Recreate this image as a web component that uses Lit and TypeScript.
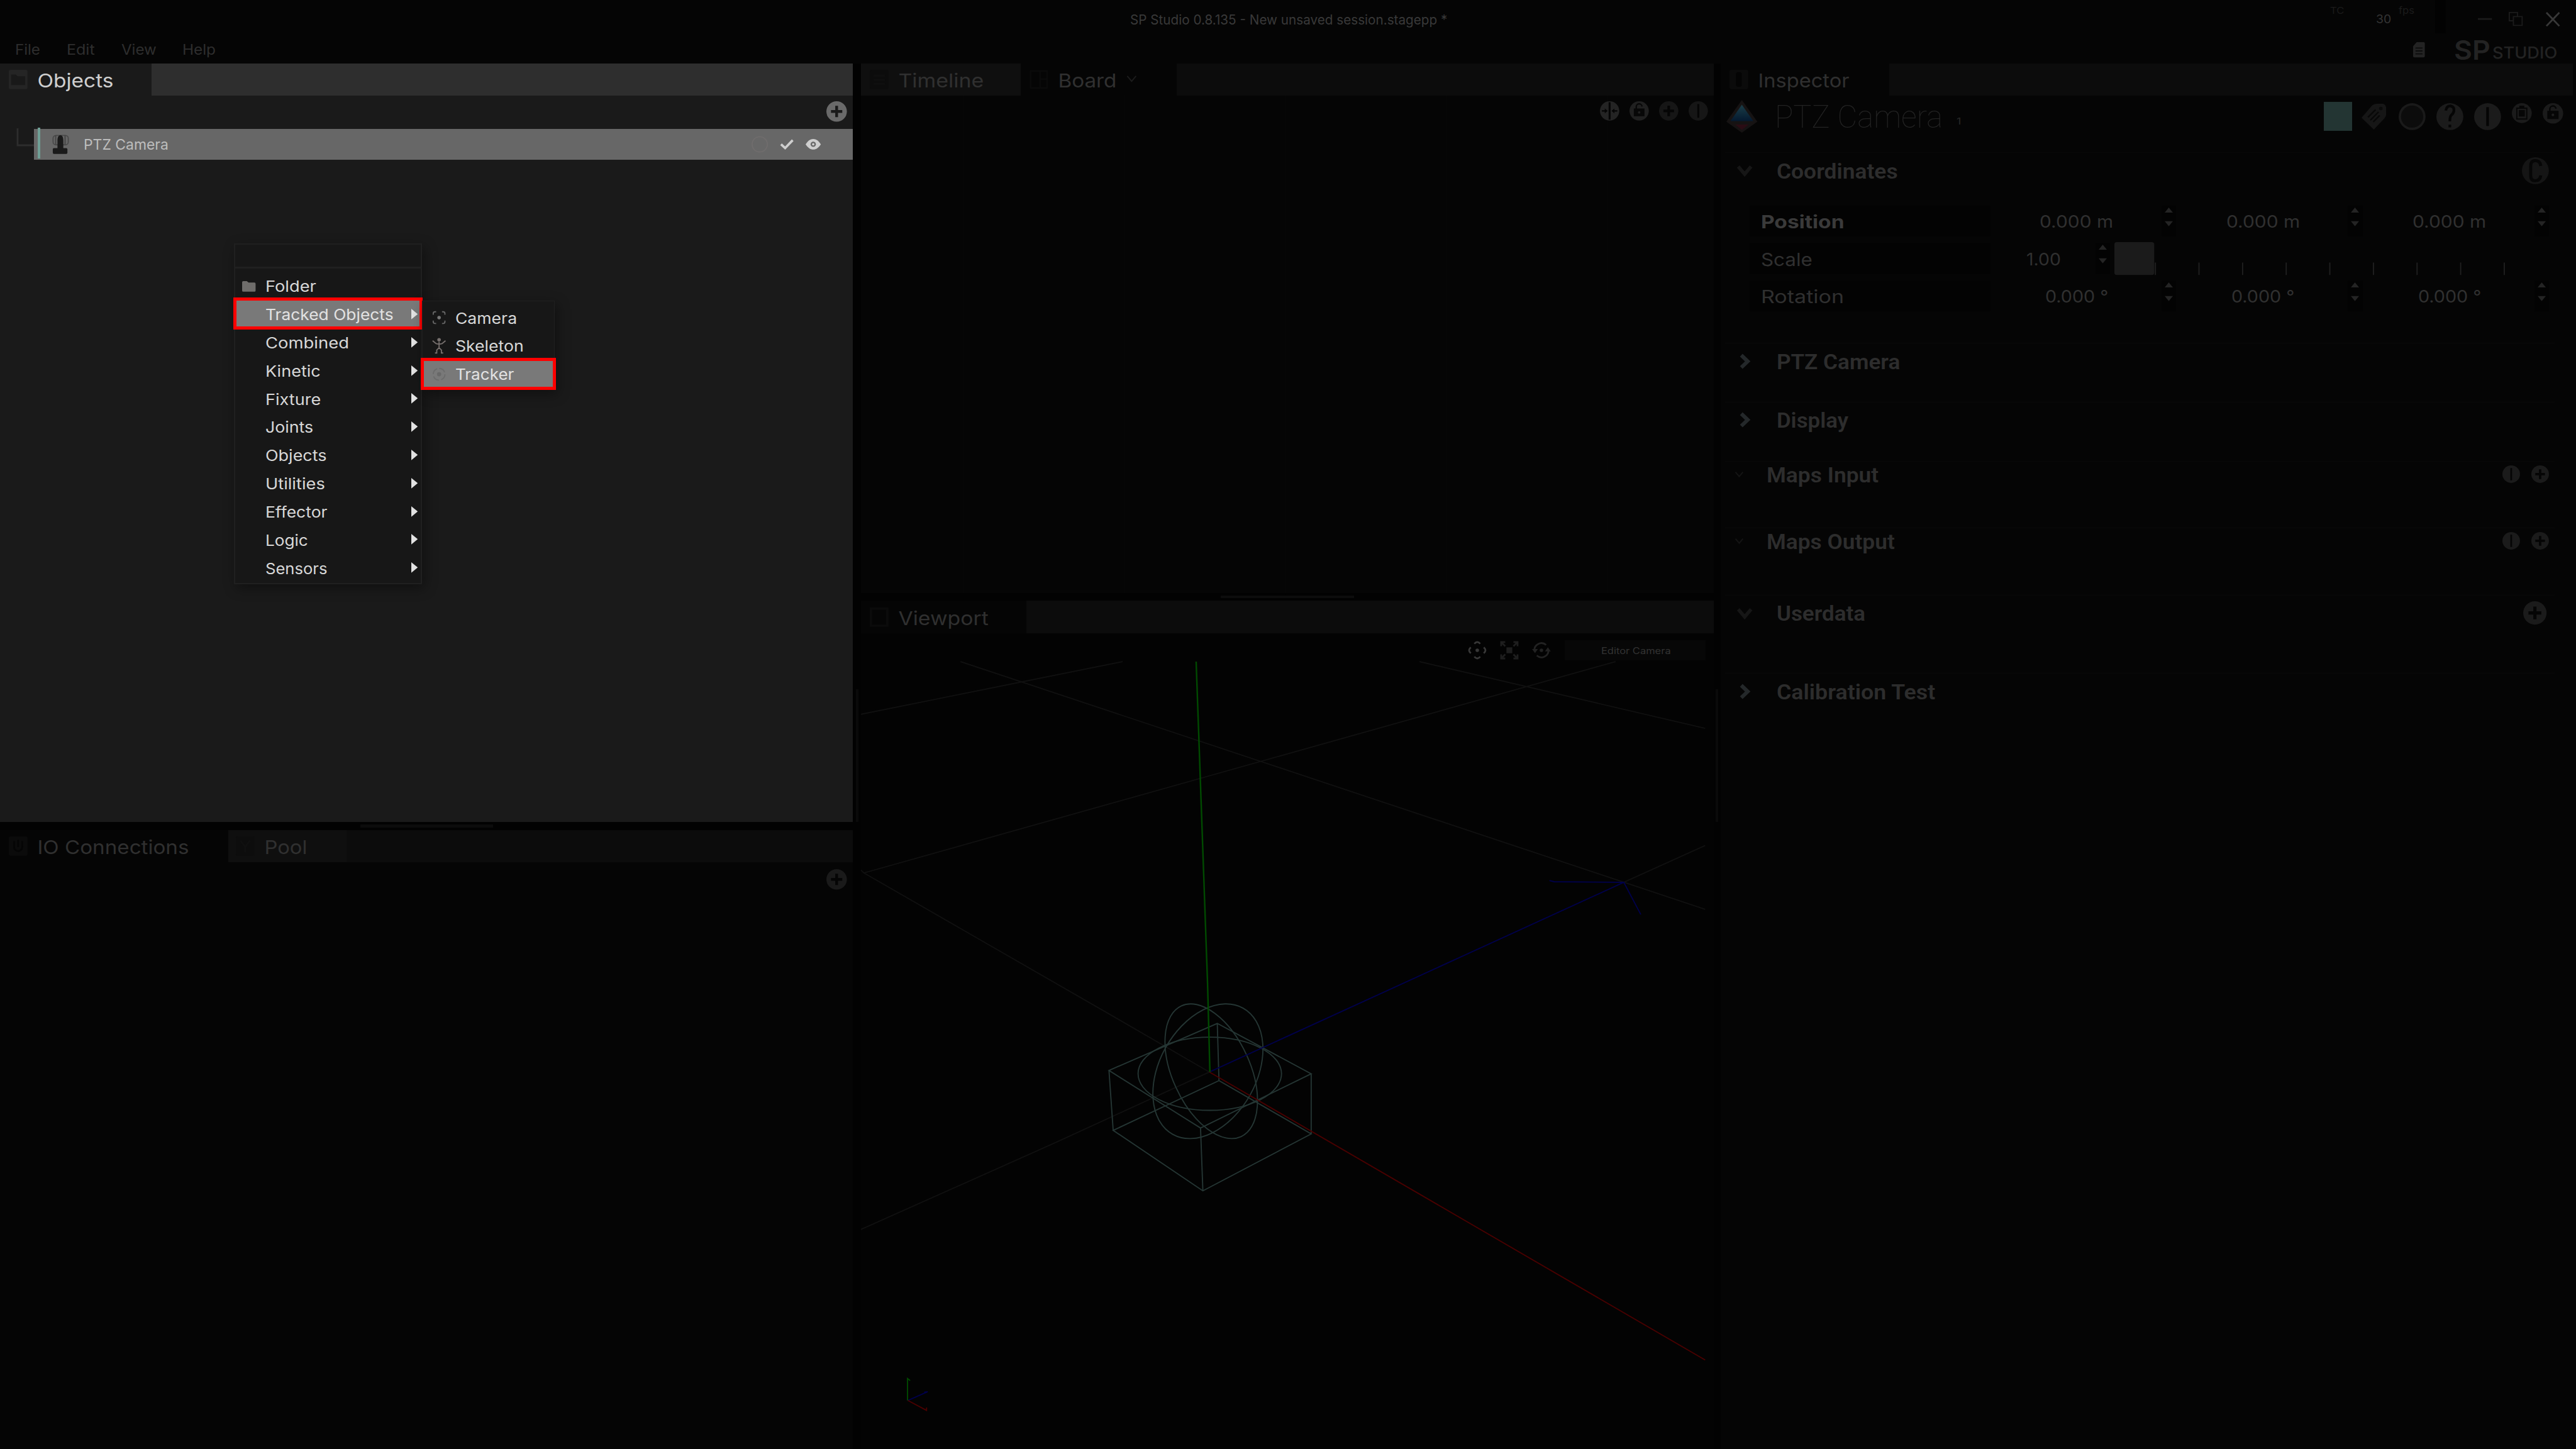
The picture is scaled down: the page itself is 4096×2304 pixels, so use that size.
import { LitElement, html, svg, css, unsafeCSS, nothing } from "lit";
import { customElement } from "lit/decorators.js";

type Face = { weight: number; size: number; family: string };

const UI = "Inter";
const FACES: Record<string, Face> = {
  title: { weight: 400, size: 22.5, family: UI },
  menubar: { weight: 400, size: 24, family: UI },
  tab: { weight: 400, size: 32.5, family: UI },
  row: { weight: 400, size: 25, family: UI },
  item: { weight: 400, size: 26, family: UI },
  tiny: { weight: 400, size: 16, family: UI },
  fps: { weight: 400, size: 20, family: UI },
  logo: { weight: 600, size: 45, family: UI },
  logosub: { weight: 500, size: 27, family: UI },
  cam: { weight: 400, size: 15, family: UI },
  name: { weight: 100, size: 53, family: "Roboto" },
  section: { weight: 600, size: 36.5, family: "Roboto" },
  label: { weight: 400, size: 31, family: UI },
  strong: { weight: 700, size: 31, family: UI },
  value: { weight: 400, size: 28.5, family: UI },
};

const faceRules = Object.entries(FACES)
  .map(
    ([k, f]) =>
      `.f-${k}{font:${f.weight} ${f.size}px "${f.family}","Liberation Sans",sans-serif}`
  )
  .join("");

const ctx = document.createElement("canvas").getContext("2d")!;

/** One line of text whose glyphs are widened to span `width` pixels. */
const text = (face: string, value: string, width: number) => {
  const f = FACES[face];
  ctx.font = `${f.weight} ${f.size}px "${f.family}", "Liberation Sans", sans-serif`;
  const span = width + 3;
  const stretch = span / ctx.measureText(value).width;
  return html`<span class="t f-${face}" style="width:${span}px"><span class="g" style="--k:${stretch.toFixed(4)}">${value}</span></span>`;
};

const icon = (w: number, h: number, box: string, body: unknown, cls = "") =>
  html`<svg class="ico ${cls}" width=${w} height=${h} viewBox=${box}>${body}</svg>`;

const disc = (d: number, fill: string, body: unknown, cls = "") =>
  icon(d, d, "-20 -20 40 40", svg`<circle r="20" fill=${fill} />${body}`, cls);

const plusMark = (ink: string) =>
  svg`<path d="M0-11V11M-11 0H11" stroke=${ink} stroke-width="5.4" fill="none"/>`;
const barMark = (ink: string) =>
  svg`<path d="M0-14V14" stroke=${ink} stroke-width="4" fill="none"/>`;
const lockMark = (ink: string) =>
  svg`<path d="M-6-3V-8a6 6 0 0 1 12-1" stroke=${ink} stroke-width="3" fill="none"/><path d="M-11-5H11V11H-11Z" fill=${ink}/><circle cy="3" r="2.6" fill="#1f1f1f"/>`;

const chevDown = (w: number, h: number, color: string, sw: number) =>
  icon(w, h, "0 0 26 19", svg`<path d="M2 3L13 16L24 3" fill="none" stroke=${color} stroke-width=${sw}/>`);
const chevRight = () =>
  icon(20, 27, "0 0 20 27", svg`<path d="M4 3L15 13.5L4 24" fill="none" stroke="#24282a" stroke-width="6.5"/>`);

const spinner = () =>
  html`<span class="spin">${icon(14, 32, "0 0 14 32", svg`<path d="M0 8.5L7 0L14 8.5ZM0 23.5L7 32L14 23.5Z" fill="#242424"/>`)}</span>`;

const tabIcon = (color: string, body: unknown = nothing) =>
  icon(32, 33, "0 0 32 33", svg`<rect width="32" height="33" rx="3" fill=${color}/>${body}`);

const MENU: [string, number][] = [
  ["Folder", 84], ["Tracked Objects", 216], ["Combined", 140], ["Kinetic", 91.5],
  ["Fixture", 92], ["Joints", 79], ["Objects", 102], ["Utilities", 99],
  ["Effector", 103], ["Logic", 70], ["Sensors", 103],
];

const SUBMENU: { name: string; width: number; art: unknown; picked?: boolean }[] = [
  {
    name: "Camera", width: 102.5,
    art: svg`<path d="M-10-5V-7a3 3 0 0 1 3-3H-5M5-10H7a3 3 0 0 1 3 3V-5M10 5V7a3 3 0 0 1-3 3H5M-5 10H-7a3 3 0 0 1-3-3V5" fill="none" stroke="#666" stroke-width="2"/><circle r="3" fill="#777"/>`,
  },
  {
    name: "Skeleton", width: 114,
    art: svg`<circle cy="-10.500" r="3" fill="#77706e"/><path d="M-11-9L-5-4L0-3L5-4L11-9M0-7V3M0 3L-4 7L-4 12H-7M0 3L4 7L4 12H7" fill="none" stroke="#77706e" stroke-width="2"/>`,
  },
  {
    name: "Tracker", width: 97.5, picked: true,
    art: svg`<circle r="10" fill="none" stroke="#6c6c6c" stroke-width="2" stroke-dasharray="12 3.7"/><circle r="3.600" fill="#686868"/>`,
  },
];

@customElement("app-root")
export class AppRoot extends LitElement {
  static styles = [
    unsafeCSS(faceRules),
    css`
      :host { display: block; width: 4096px; height: 2304px; overflow: hidden; background: #050505; }
      .app {
        zoom: 0.930909; width: 4400px; height: 2475px; position: relative; overflow: hidden;
        display: flex; flex-direction: column; background: #050505; color: #303030;
      }
      .t { white-space: pre; display: block; flex: none; line-height: 1.2; }
      .g { display: block; transform: translate(1px, 1.5px) scaleX(var(--k)); transform-origin: 0 50%; }
      .f-tab .g { transform: translate(1.5px, 2px) scaleX(var(--k)); }
      .ico { display: block; flex: none; overflow: visible; }
      .grow { flex: 1; }

      .titlebar { display: grid; grid-template-columns: 1fr auto 1fr; height: 65px; align-items: center; color: #393939; }
      .winbtns { display: flex; align-items: center; height: 65px; justify-content: flex-end; padding-right: 28px; }
      .dim { color: #1b1b1b; margin-bottom: 28px; }
      .fpsval { margin: 0 13px 3px 54px; color: #343434; }
      .block { width: 19px; height: 57px; background: #020202; margin: 0 54px 8px 36px; }
      .min { margin-right: 29px; }
      .restore { margin-right: 41px; }
      .menubar { display: flex; height: 43px; padding: 0 33px 4px 25px; gap: 45px; align-items: center; box-sizing: border-box; color: #2e2e2e; }
      .brand { display: flex; align-items: center; color: #232323; }
      .doc { margin-right: 48px; }
      .sub { padding: 9px 0 0 4px; }

      .main { flex: 1; display: flex; min-height: 0; }
      .col { display: flex; flex-direction: column; flex: none; }
      .left { width: 1457px; }
      .mid { width: 1456px; }
      .right { width: 1456px; background: #050505; }
      .gutter { flex: none; background: #020202; display: flex; justify-content: center; padding-top: 1069px; box-sizing: border-box; }
      .g1 { width: 14px; }
      .g2 { width: 12px; }
      .vgrip { width: 4px; height: 227px; background: #0a0a0a; }
      .divider { flex: none; background: #020202; display: flex; justify-content: center; align-items: center; }
      .d1 { height: 14px; }
      .d2 { height: 13px; }
      .hgrip { width: 227px; height: 5px; background: #0c0c0c; }

      .tabs { height: 55px; flex: none; display: flex; background: #0c0c0c; color: #303030; }
      .tabs.lit { background: #2e2e2e; color: #cfcfcf; }
      .tabs.tall { height: 56px; }
      .tab { display: flex; align-items: center; gap: 15px; padding-left: 15px; box-sizing: border-box; background: #050505; }
      .tab.idle { background: #0f0f0f; }
      .lit .tab { background: #1a1a1a; }
      .w1 { width: 259px; } .w2 { width: 390px; } .w3 { width: 202px; padding-left: 13px; }
      .w4 { width: 273px; } .w5 { width: 266px; } .w6 { width: 282px; } .w7 { width: 288px; }
      .chev { margin-left: 3px; margin-bottom: 2px; }

      .objects { height: 1296px; flex: none; background: #1a1a1a; }
      .tools { height: 56px; display: flex; align-items: center; justify-content: flex-end; padding-right: 11px; }
      .treerow { display: flex; height: 55px; }
      .objrow {
        flex: 1; margin-top: 1px; height: 53px; display: flex; align-items: center; background: #676767;
        color: #bdbdbd; padding: 0 55px 0 6px; box-sizing: border-box;
      }
      .mark { width: 5px; height: 53px; margin-bottom: 4px; background: #6f9f95; }
      .ptz { margin: 0 24px 0 20px; }
      .gap { margin-right: 20px; }

      .io { flex: 1; background: #050505; }
      .io .tools { height: 58px; }

      .board { height: 905px; flex: none; }
      .lanes {
        height: 850px; box-sizing: border-box; padding: 10px 10px; display: flex; justify-content: flex-end; gap: 17.5px;
        background: linear-gradient(90deg, #070707 0 1.5px, transparent 1.5px) 175px 0 / 275px 100%, #050505;
      }
      .viewport { flex: 1; background: #030303; }
      .vtools { height: 48px; display: flex; align-items: center; justify-content: flex-end; gap: 25px; padding: 10px 14px 0 0; box-sizing: border-box; }
      .cam-box { width: 240px; height: 35px; background: #070707; display: flex; align-items: center; justify-content: center; color: #333; }

      .head { display: flex; align-items: center; height: 72px; padding: 0 17px 0 10px; margin-bottom: 25px; color: #232323; }
      .nm { margin: 0 24px 0 28px; }
      .one { padding-top: 17px; color: #282828; }
      .swatch { width: 49px; height: 49px; background: #233533; margin-right: 16px; }
      .i21 { margin-right: 21px; }
      .i19 { margin-right: 18.5px; }
      .up { margin-bottom: 11px; }
      .sec { border-top: 2px solid #090909; margin: 0 32px 0 8px; box-sizing: border-box; color: #2d2d2d; }
      .sh { display: flex; align-items: center; height: 60px; padding: 0 9px 0 20px; }
      .sh.small { height: 44px; padding: 0 9px 0 16px; }
      .slot { width: 67px; display: flex; }
      .slot.r { padding-left: 3px; width: 64px; }
      .small .slot { width: 53px; }
      .pair { gap: 20px; display: flex; }
      .nudge { margin-right: 4px; }
      .rows { display: flex; flex-direction: column; gap: 11px; padding: 30px 0 0 41px; }
      .prop { display: flex; height: 53px; align-items: center; color: #303030; }
      .plabel { width: 412px; height: 53px; box-sizing: border-box; background: #030303; padding: 2px 0 0 19px; display: flex; align-items: center; flex: none; }
      .plabel.on { color: #3a3a3a; }
      .cell { width: 318.5px; display: flex; align-items: center; flex: none; height: 53px; }
      .val { width: 292px; display: flex; justify-content: center; padding-top: 1px; box-sizing: border-box; }
      .val.s { width: 180px; }
      .spin { width: 25px; height: 53px; background: #030303; display: flex; justify-content: center; padding-top: 3px; box-sizing: border-box; }
      .slide { margin-left: 8px; }
      .h100 { height: 100px; } .h101 { height: 101px; } .h114 { height: 114px; } .h115 { height: 115px; } .h133 { height: 134px; } .h326 { height: 326px; }

      .menu, .submenu { position: absolute; box-sizing: border-box; background: #171717; color: #d8d8d8; box-shadow: 4px 6px 20px rgba(0, 0, 0, 0.4); display: flex; flex-direction: column; }
      .menu { left: 400px; top: 416px; width: 321px; height: 582px; border: 3px solid #202020; }
      .submenu { left: 721px; top: 513px; width: 226px; height: 153px; border: 2px solid #202020; padding-top: 4px; }
      .search { height: 41px; border-bottom: 4px solid #202020; box-sizing: border-box; margin-bottom: 4px; flex: none; }
      .mi { height: 48.15px; flex: none; display: flex; align-items: center; box-sizing: border-box; padding: 3px 5px 0 11px; }
      .mi .lead { width: 39px; display: flex; flex: none; }
      .mi .arrow { margin: 0 0 1px auto; }
      .mi.picked { background: #797979; outline: 5.4px solid #f00; outline-offset: -3px; color: #e2e2e2; }
      .submenu .mi { padding: 1px 0 0 16px; }
    `,
  ];

  private titlebar() {
    return html`
      <div class="titlebar">
        <span></span>
        ${text("title", "SP Studio 0.8.135 - New unsaved session.stagepp *", 539)}
        <div class="winbtns">
          <span class="dim">${text("tiny", "TC", 21)}</span>
          <span class="fpsval">${text("fps", "30", 23)}</span>
          <span class="dim">${text("tiny", "fps", 24)}</span>
          <span class="block"></span>
          ${icon(24, 24, "0 0 24 24", svg`<path d="M0 12H24" stroke="#1b1b1b" stroke-width="3"/>`, "min")}
          ${icon(24, 24, "0 0 24 24", svg`<path d="M7 15H1V1H15V7M8 8H23V23H8Z" fill="none" stroke="#1b1b1b" stroke-width="2"/>`, "restore")}
          ${icon(22, 23, "0 0 22 23", svg`<path d="M0 0L22 23M22 0L0 23" stroke="#383838" stroke-width="3"/>`)}
        </div>
      </div>
      <div class="menubar">
        ${text("menubar", "File", 40)}${text("menubar", "Edit", 45)}${text("menubar", "View", 57)}${text("menubar", "Help", 54)}
        <span class="grow"></span>
        <div class="brand">
          ${icon(20, 26, "0 0 20 26", svg`<path d="M6 0H18a2 2 0 0 1 2 2V24a2 2 0 0 1-2 2H2a2 2 0 0 1-2-2V7Z" fill="#232323"/><path d="M4 10H16M4 15H16M4 20H16" stroke="#0c0c0c" stroke-width="2"/>`, "doc")}
          ${text("logo", "SP", 59)}<span class="sub">${text("logosub", "STUDIO", 108)}</span>
        </div>
      </div>`;
  }

  private objects() {
    return html`
      <div class="objects">
        <div class="tabs lit">
          <div class="tab w1">
            ${tabIcon("#252525", svg`<path d="M4 8H12L15 11H28V26H4Z" fill="#191919"/>`)}
            ${text("tab", "Objects", 127)}
          </div>
        </div>
        <div class="tools">${disc(35, "#6a6a6a", plusMark("#1a1a1a"))}</div>
        <div class="treerow">
          ${icon(58, 55, "0 0 58 55", svg`<path d="M30 0V29H58" fill="none" stroke="#2d2d2d" stroke-width="3"/>`)}
          <div class="objrow">
            <span class="mark"></span>
            ${icon(29, 33, "0 0 29 33", svg`<rect x="1.500" y="1.500" width="26" height="16" rx="5" fill="none" stroke="#4a4a4a" stroke-width="2"/><path d="M6 1V17M22 1V17" stroke="#444" stroke-width="2"/><path d="M14 1c4 0 5 5 5 9V23h5a2 2 0 0 1 2 2v6a2 2 0 0 1-2 2H3a2 2 0 0 1-2-2V25a2 2 0 0 1 2-2H9V10c0-4 1-9 5-9Z" fill="#1a1a1a"/>`, "ptz")}
            ${text("row", "PTZ Camera", 142)}
            <span class="grow"></span>
            ${icon(28, 29, "0 0 28 29", svg`<circle cx="14" cy="14.500" r="13" fill="none" stroke="#706d6d" stroke-width="2"/>`, "gap")}
            ${icon(24, 18, "0 0 24 18", svg`<path d="M2 9L9 15.500L22 2" fill="none" stroke="#cfcfcf" stroke-width="4"/>`, "gap")}
            ${icon(26, 18, "0 0 26 18", svg`<path d="M0 9C4 3 8 0 13 0S22 3 26 9C22 15 18 18 13 18S4 15 0 9Z" fill="#cfcfcf"/><circle cx="13" cy="9" r="4.500" fill="#676767"/><circle cx="13" cy="9" r="2" fill="#cfcfcf"/>`)}
          </div>
        </div>
      </div>`;
  }

  private io() {
    return html`
      <div class="io">
        <div class="tabs">
          <div class="tab w2">
            ${tabIcon("#0b0b0b", svg`<path d="M9 8V18a7 7 0 0 0 14 0V8M16 6V18" fill="none" stroke="#050505" stroke-width="3"/>`)}
            ${text("tab", "IO Connections", 256)}
          </div>
          <div class="tab idle w3">
            ${tabIcon("#0d0d0d", svg`<path d="M8 7L16 18L24 7M16 18V27" fill="none" stroke="#101010" stroke-width="3"/>`)}
            ${text("tab", "Pool", 70)}
          </div>
        </div>
        <div class="tools">${disc(35, "#1a1a1a", plusMark("#050505"))}</div>
      </div>`;
  }

  private board() {
    return html`
      <div class="board">
        <div class="tabs">
          <div class="tab idle w4">
            ${tabIcon("#0c0c0c", svg`<path d="M6 10H26M6 17H26M6 24H26" stroke="#0f0f0f" stroke-width="3"/>`)}
            ${text("tab", "Timeline", 143)}
          </div>
          <div class="tab w5">
            ${icon(32, 33, "0 0 32 33", svg`<path d="M2 2H30V31H2ZM18 2V31M18 16H30" fill="none" stroke="#0a0a0a" stroke-width="3"/>`)}
            ${text("tab", "Board", 97)}
            <span class="chev">${chevDown(18, 13, "#1c1c1c", 3)}</span>
          </div>
        </div>
        <div class="lanes">
          ${disc(33, "#242424", svg`<path d="M0-18V18" stroke="#050505" stroke-width="4"/><path d="M-16 0H-6M6 0H16" stroke="#050505" stroke-width="3"/><path d="M-10-5L-4 0L-10 5ZM10-5L4 0L10 5Z" fill="#050505"/>`)}
          ${disc(33, "#202020", lockMark("#070707"))}
          ${disc(33, "#161616", plusMark("#050505"))}
          ${disc(33, "#161616", barMark("#050505"))}
        </div>
      </div>`;
  }

  private viewport() {
    const grid = "M1641 1130L2913 1553M1918 1130L1471 1220M2425 1130L2913 1244M2760 1130L1476 1491L1471 1486M1476 1491L1909 1740L2066 1831L1800 1953L1471 2100M2913 1444L2774 1507";
    const cube = "M1894.600 1828.300L2079.600 1748L2240 1834L2051 1926.700ZM1901.800 1930.700L2082.500 1845.700L2240 1936.700L2055 2034ZM1894.600 1828.300L1901.800 1930.700M2079.600 1748L2082.500 1845.700M2240 1834V1936.700M2051 1926.700L2055 2034";
    return html`
      <div class="viewport">
        <div class="tabs tall">
          <div class="tab w6">
            ${icon(32, 33, "0 0 32 33", svg`<rect x="2" y="2" width="28" height="29" fill="none" stroke="#0b0b0b" stroke-width="4"/>`)}
            ${text("tab", "Viewport", 151)}
          </div>
        </div>
        <div class="vtools">
          ${icon(30, 30, "-15 -15 30 30", svg`<circle r="3" fill="#383838"/><path d="M-5-11Q0-17 5-11M-5 11Q0 17 5 11M-11-5Q-17 0-11 5M11-5Q17 0 11 5" fill="none" stroke="#383838" stroke-width="3"/>`)}
          ${icon(30, 30, "-15 -15 30 30", svg`<rect x="-5" y="-5" width="10" height="10" fill="#1e1e1e"/><path d="M-14-7V-14H-7M7-14H14V-7M14 7V14H7M-7 14H-14V7M-14-14L-7-7M14-14L7-7M14 14L7 7M-14 14L-7 7" fill="none" stroke="#1e1e1e" stroke-width="3"/>`)}
          ${icon(30, 30, "-15 -15 30 30", svg`<circle r="3" fill="#222"/><path d="M8-9A12 12 0 0 0-12 1M-8 9A12 12 0 0 0 12-1" fill="none" stroke="#222" stroke-width="3"/><path d="M-16-2L-11 5L-6-2ZM16 2L11-5L6 2Z" fill="#222"/>`)}
          <div class="cam-box">${text("cam", "Editor Camera", 116)}</div>
        </div>
        <svg class="ico" width="1443" height="1345" viewBox="1471 1130 1443 1345" fill="none" stroke-width="2">
          <path d=${grid} stroke="#101010" />
          <g stroke="#253634">
            <path d=${cube} />
            <ellipse cx="2066.800" cy="1834" rx="122.500" ry="62.500" />
            <ellipse rx="122.700" ry="66.400" transform="translate(2069.300 1829.700) rotate(65.500)" />
            <ellipse rx="123.400" ry="82.700" transform="translate(2063.600 1829.700) rotate(-60.800)" />
          </g>
          <path d="M2066 1831L2774 1507M2647 1504L2655 1506L2774 1507L2803 1562" stroke="#00004a" />
          <path d="M2066 1831L2913 2323" stroke="#4a0000" />
          <path d="M2067 1831L2063 1680L2043.500 1130" stroke="#004a00" stroke-width="2.600" />
          <path d="M1551 2392L1585 2377L1579 2378" stroke="#00004a" />
          <path d="M1551 2392L1583 2409V2404" stroke="#4a0000" />
          <path d="M1550.500 2392V2354.500L1555 2358" stroke="#004a00" />
        </svg>
      </div>`;
  }

  private section(title: string, width: number, size: string, open: boolean, tail: unknown = nothing) {
    return html`
      <div class="sec ${size}">
        <div class="sh">
          <span class="slot ${open ? "" : "r"}">${open ? chevDown(26, 19, "#161616", 6) : chevRight()}</span>
          ${text("section", title, width)}
          <span class="grow"></span>${tail}
        </div>
      </div>`;
  }

  private maps(title: string, width: number, size: string) {
    return html`
      <div class="sec ${size}">
        <div class="sh small">
          <span class="slot">${chevDown(16, 11, "#141414", 4)}</span>
          ${text("section", title, width)}
          <span class="grow"></span>
          <span class="pair">${disc(30, "#1b1b1b", barMark("#050505"))}${disc(30, "#1b1b1b", plusMark("#050505"))}</span>
        </div>
      </div>`;
  }

  private vector(face: string, label: string, lw: number, value: string, vw: number) {
    return html`
      <div class="prop">
        <span class="plabel ${face === "strong" ? "on" : ""}">${text(face, label, lw)}</span>
        ${[0, 1, 2].map(() => html`<span class="cell"><span class="val">${text("value", value, vw)}</span>${spinner()}</span>`)}
      </div>`;
  }

  private inspector() {
    const ticks = Array.from({ length: 9 }, (_, i) => `M${70 + i * 74.5} 35V56`).join("");
    return html`
      <div class="tabs">
        <div class="tab w7">
          ${tabIcon("#0b0b0b", svg`<rect x="11" y="4" width="10" height="25" rx="4" fill="#040404"/>`)}
          ${text("tab", "Inspector", 153)}
        </div>
      </div>
      <div class="head">
        ${icon(53, 56, "0 0 53 56", svg`
          <defs><linearGradient id="gem" x1="0" y1="0" x2="0" y2="1"><stop offset="0" stop-color="#1b3e48"/><stop offset="1" stop-color="#04192f"/></linearGradient></defs>
          <path d="M26.500 0L53 37L26.500 56L0 37Z" fill="#161313"/>
          <path d="M26.500 8L46 36H7Z" fill="url(#gem)"/>
          <path d="M15 42H38L26.500 51Z" fill="#2a0c14"/>`)}
        <span class="nm">${text("name", "PTZ Camera", 284)}</span>
        <span class="one">${text("tiny", "1", 5)}</span>
        <span class="grow"></span>
        <span class="swatch"></span>
        ${icon(42, 44, "0 0 42 44", svg`<path d="M18 3Q21 0 26 0H36Q42 1 42 8V18Q42 22 39 25L21 44L0 24Z" fill="#161616"/><path d="M11 23L24 10M15 28L29 14M20 31L31 20" stroke="#080808" stroke-width="2.500"/><circle cx="33" cy="8" r="3" fill="#0a0a0a"/>`, "i21")}
        ${disc(46, "#1a1a1a", svg`<circle r="16.500" fill="#0c0c0c"/>`, "i19")}
        ${disc(46, "#1b1b1b", svg`<path d="M-6-9Q-5-16 1-16Q7-15 6-8Q5-4 2-2Q0 0 0 7M0 12V16" fill="none" stroke="#050505" stroke-width="4"/>`, "i19")}
        ${disc(46, "#1b1b1b", barMark("#050505"), "i19")}
        ${disc(34, "#1b1b1b", svg`<path d="M-10-10H10V12H-10Z" fill="none" stroke="#060606" stroke-width="2.500"/><path d="M-6-6H6V7H-6ZM-5-15H5V-9H-5Z" fill="#060606"/>`, "i19 up")}
        ${disc(35, "#1b1b1b", lockMark("#060606"), "up")}
      </div>
      <div class="sec h326">
        <div class="sh">
          <span class="slot">${chevDown(26, 19, "#161616", 6)}</span>
          ${text("section", "Coordinates", 204)}
          <span class="grow"></span>
          ${disc(46, "#151515", svg`<path d="M8-7Q7-15 0-15Q-7-15-7-7V7Q-7 15 0 15Q7 15 8 7" fill="none" stroke="#060606" stroke-width="4.500"/>`)}
        </div>
        <div class="rows">
          ${this.vector("strong", "Position", 139.5, "0.000 m", 123)}
          <div class="prop">
            <span class="plabel">${text("label", "Scale", 85)}</span>
            <span class="val s">${text("value", "1.00", 56)}</span>${spinner()}
            ${icon(751, 56, "0 0 751 56", svg`<path d=${ticks} stroke="#202020" stroke-width="2"/><rect width="68" height="56" rx="4" fill="#1b1b1b"/>`, "slide")}
          </div>
          ${this.vector("label", "Rotation", 139, "0.000 °", 105)}
        </div>
      </div>
      ${this.section("PTZ Camera", 208, "h100", false)}
      ${this.section("Display", 119.5, "h101", false)}
      ${this.maps("Maps Input", 188.5, "h114")}
      ${this.maps("Maps Output", 216, "h115")}
      ${this.section("Userdata", 148.5, "h133", true, disc(40, "#1b1b1b", plusMark("#050505"), "nudge"))}
      ${this.section("Calibration Test", 269, "h100", false)}`;
  }

  private menus() {
    return html`
      <div class="menu">
        <div class="search"></div>
        ${MENU.map(([name, w], i) => html`
          <div class="mi ${i === 1 ? "picked" : ""}">
            <span class="lead">${i === 0
              ? icon(23, 18, "0 0 23 18", svg`<path d="M2 0H8L11 2.500H21a2 2 0 0 1 2 2V16a2 2 0 0 1-2 2H2a2 2 0 0 1-2-2V2a2 2 0 0 1 2-2Z" fill="#6f6d6b"/>`)
              : nothing}</span>
            ${text("item", name, w)}
            ${i > 0 ? icon(11, 18, "0 0 11 18", svg`<path d="M0 0L11 9L0 18Z" fill="#e2e2e2"/>`, "arrow") : nothing}
          </div>`)}
      </div>
      <div class="submenu">
        ${SUBMENU.map((s) => html`
          <div class="mi ${s.picked ? "picked" : ""}">
            <span class="lead">${icon(24, 26, "-12 -13 24 26", s.art)}</span>
            ${text("item", s.name, s.width)}
          </div>`)}
      </div>`;
  }

  render() {
    return html`
      <div class="app">
        ${this.titlebar()}
        <div class="main">
          <div class="col left">
            ${this.objects()}
            <div class="divider d1"><span class="hgrip"></span></div>
            ${this.io()}
          </div>
          <div class="gutter g1"><span class="vgrip"></span></div>
          <div class="col mid">
            ${this.board()}
            <div class="divider d2"><span class="hgrip"></span></div>
            ${this.viewport()}
          </div>
          <div class="gutter g2"><span class="vgrip"></span></div>
          <div class="col right">${this.inspector()}</div>
        </div>
        ${this.menus()}
      </div>`;
  }
}
